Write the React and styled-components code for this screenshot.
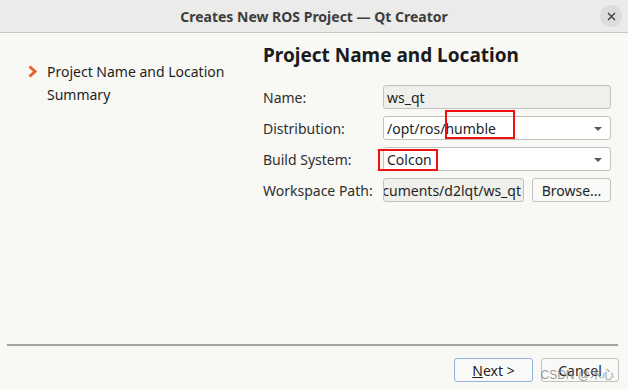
import styled, { createGlobalStyle } from 'styled-components';

// Global

const GlobalStyle = createGlobalStyle`
    html, body {
        margin: 0;
        padding: 0;
        background: #f8f8f5;
    }
    body {
        font-family: "Noto Sans", "Open Sans", sans-serif;
        color: #2e2e2e;
    }
`;

// Styled Components

const Window = styled.div`
    width: 628px;
    height: 390px;
    display: flex;
    flex-direction: column;
    background: #f8f8f5;
    overflow: hidden;
`;

const TitleBar = styled.header`
    position: relative;
    height: 33px;
    flex: none;
    display: flex;
    align-items: center;
    justify-content: center;
    background: #ebebea;
    border-bottom: 1px solid #c8c8c5;
    box-sizing: border-box;
`;

const Title = styled.h1`
    margin: 0;
    font-size: 14px;
    font-weight: 700;
    color: #3d3d3d;
`;

const CloseButton = styled.span`
    position: absolute;
    right: 6px;
    top: 5px;
    width: 22px;
    height: 22px;
    border-radius: 50%;
    background: #dcdcdb;
    display: flex;
    align-items: center;
    justify-content: center;
`;

const Body = styled.main`
    flex: 1;
    display: flex;
    min-height: 0;
`;

const Sidebar = styled.nav`
    width: 263px;
    flex: none;
    box-sizing: border-box;
    padding: 27px 0 0 28px;
`;

const Step = styled.div`
    display: flex;
    align-items: center;
    height: 23px;
    font-size: 14px;
    color: #1f1f1f;
`;

const StepMarker = styled.span`
    width: 19px;
    flex: none;
    display: flex;
    align-items: center;
`;

const Content = styled.section`
    flex: 1;
    min-width: 0;
    padding: 8px 17px 0 0;
`;

const Heading = styled.h2`
    margin: 0 0 16px 0;
    font-size: 19px;
    font-weight: 700;
    color: #1b1b1b;
    line-height: 28px;
`;

const Form = styled.div`
    display: grid;
    grid-template-columns: 120px minmax(0, 1fr);
    grid-auto-rows: 24px;
    row-gap: 7px;
    align-items: center;
`;

const Label = styled.label`
    font-size: 14px;
    color: #2f2f2f;
    white-space: nowrap;
`;

const Field = styled.div`
    position: relative;
    height: 24px;
    min-width: 0;
    box-sizing: border-box;
    border: 1px solid #c2c1bd;
    border-radius: 3px;
    background: ${p => (p.$readOnly ? '#efefec' : '#ffffff')};
    display: flex;
    align-items: center;
    justify-content: ${p => (p.$end ? 'flex-end' : 'flex-start')};
    padding: ${p => (p.$end ? '0 2px 0 0' : '0 0 0 3px')};
    overflow: ${p => (p.$clip ? 'hidden' : 'visible')};
    white-space: nowrap;
    font-size: 14px;
    color: #1f1f1f;
`;

const Arrow = styled.span`
    position: absolute;
    right: 8px;
    top: 10px;
    width: 0;
    height: 0;
    border-left: 4px solid transparent;
    border-right: 4px solid transparent;
    border-top: 4px solid #5a5a5a;
`;

const Highlight = styled.span`
    position: absolute;
    left: ${p => p.$left}px;
    top: ${p => p.$top}px;
    width: ${p => p.$width}px;
    height: ${p => p.$height}px;
    border: 2px solid #f01010;
    box-sizing: border-box;
    pointer-events: none;
`;

const PathRow = styled.div`
    display: flex;
    gap: 8px;
    height: 24px;
    min-width: 0;
`;

const Button = styled.button`
    height: 24px;
    box-sizing: border-box;
    padding: 0;
    border: 1px solid ${p => (p.$default ? '#8fb3dc' : '#c2c1bd')};
    border-radius: 3px;
    background: #f9f9f7;
    font-family: "Noto Sans", "Open Sans", sans-serif;
    font-size: 14px;
    color: #1f1f1f;
    width: ${p => p.$width}px;
    flex: none;
`;

const Separator = styled.hr`
    margin: 0 10px 12px 7px;
    border: none;
    border-top: 2px solid #a3a3a0;
    height: 0;
`;

const Footer = styled.footer`
    display: flex;
    justify-content: flex-end;
    gap: 8px;
    padding: 0 9px 8px 0;
    position: relative;
`;

const Mnemonic = styled.span`
    text-decoration: underline;
`;

const Watermark = styled.span`
    position: absolute;
    right: 14px;
    top: 7px;
    font-family: "Liberation Sans", "Noto Sans CJK SC", sans-serif;
    font-size: 12px;
    color: rgba(120, 120, 120, 0.75);
    pointer-events: none;
`;

const Chevron = () => (
    <svg width="9" height="13" viewBox="0 0 9 13">
        <polyline points="1.5,1.5 7,6.5 1.5,11.5" fill="none" stroke="#e2642a" strokeWidth="3" strokeLinejoin="miter" />
    </svg>
);

const Cross = () => (
    <svg width="9" height="9" viewBox="0 0 9 9">
        <path d="M1 1 L8 8 M8 1 L1 8" stroke="#3a3a3a" strokeWidth="1.3" />
    </svg>
);

const App = () => (
    <Window>
        <GlobalStyle />
        <TitleBar>
            <Title>Creates New ROS Project — Qt Creator</Title>
            <CloseButton><Cross /></CloseButton>
        </TitleBar>
        <Body>
            <Sidebar>
                <Step>
                    <StepMarker><Chevron /></StepMarker>
                    Project Name and Location
                </Step>
                <Step>
                    <StepMarker />
                    Summary
                </Step>
            </Sidebar>
            <Content>
                <Heading>Project Name and Location</Heading>
                <Form>
                    <Label>Name:</Label>
                    <Field $readOnly $clip>ws_qt</Field>

                    <Label>Distribution:</Label>
                    <Field>
                        /opt/ros/humble
                        <Arrow />
                        <Highlight $left={61} $top={-7} $width={70} $height={29} />
                    </Field>

                    <Label>Build System:</Label>
                    <Field>
                        Colcon
                        <Arrow />
                        <Highlight $left={-6} $top={1} $width={60} $height={22} />
                    </Field>

                    <Label>Workspace Path:</Label>
                    <PathRow>
                        <Field $readOnly $end $clip style={{ flex: 1 }}>~/Documents/d2lqt/ws_qt</Field>
                        <Button $width={79}>Browse...</Button>
                    </PathRow>
                </Form>
            </Content>
        </Body>
        <Separator />
        <Footer>
            <Button $default $width={79}><Mnemonic>N</Mnemonic>ext &gt;</Button>
            <Button $width={78}>Cancel</Button>
            <Watermark>CSDN @木心</Watermark>
        </Footer>
    </Window>
);

export default App;
